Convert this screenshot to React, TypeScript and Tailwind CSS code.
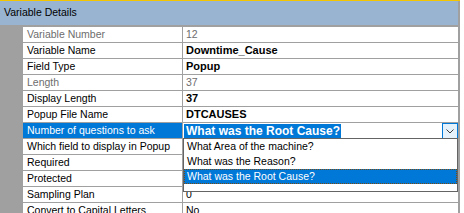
type Row = {
  label: string;
  value?: string;
  bold?: boolean;
  disabled?: boolean;
  combo?: boolean;
};

const ROWS: Row[] = [
  { label: 'Variable Number', value: '12', disabled: true },
  { label: 'Variable Name', value: 'Downtime_Cause', bold: true },
  { label: 'Field Type', value: 'Popup', bold: true },
  { label: 'Length', value: '37', disabled: true },
  { label: 'Display Length', value: '37', bold: true },
  { label: 'Popup File Name', value: 'DTCAUSES', bold: true },
  { label: 'Number of questions to ask', value: 'What was the Root Cause?', combo: true },
  { label: 'Which field to display in Popup' },
  { label: 'Required' },
  { label: 'Protected' },
  { label: 'Sampling Plan', value: '0' },
  { label: 'Convert to Capital Letters', value: 'No' },
];

const OPTIONS = ['What Area of the machine?', 'What was the Reason?', 'What was the Root Cause?'];

const GridRow = ({ row }: { row: Row }) => {
  if (row.combo) {
    return (
      <div className="flex h-[16px] border-b border-[#a0a0a0]">
        <div className="w-[23px] shrink-0 bg-[#a0a0a0]" />
        <div className="w-[160px] shrink-0 border-r border-[#a0a0a0] bg-[#0078d7] pl-[4px] text-[10.5px] leading-[15px] text-white">
          {row.label}
        </div>
        <div className="relative flex flex-1 items-start pl-[1px] leading-[15px]">
          <span className="mt-[1px] block h-[14px] bg-[#0078d7] pl-[2px] pr-[1px] text-[12px] font-bold leading-[14px] text-white">
            {row.value}
          </span>
          <div className="absolute right-0 top-0 flex h-[16px] w-[16px] items-center justify-center border border-[#0078d7] bg-[#e5f1fb]">
            <svg width="8" height="5" viewBox="0 0 8 5">
              <path d="M0.5 0.5 L4 4 L7.5 0.5" fill="none" stroke="#3c3c3c" strokeWidth="1" />
            </svg>
          </div>
        </div>
      </div>
    );
  }
  const valueCls = row.disabled
    ? 'text-[10.5px] text-[#6d6d6d]'
    : row.bold
      ? 'text-[11px] font-bold text-black'
      : 'text-[10.5px] text-black';
  return (
    <div className="flex h-[16px] border-b border-[#a0a0a0]">
      <div className="w-[23px] shrink-0 bg-[#a0a0a0]" />
      <div
        className={`w-[160px] shrink-0 border-r border-[#a0a0a0] pl-[4px] text-[10.5px] leading-[15px] ${
          row.disabled ? 'text-[#6d6d6d]' : 'text-black'
        }`}
      >
        {row.label}
      </div>
      <div className={`flex-1 pl-[3px] leading-[15px] ${valueCls}`}>{row.value}</div>
    </div>
  );
};

export default function App() {
  return (
    <div className="relative h-[213px] w-[464px] overflow-hidden bg-white font-['Liberation_Sans',Arial,sans-serif]">
      <div className="w-[460px] border-t border-[#f2c500]">
        <div className="flex">
          <div className="w-[458px]">
            <div className="flex h-[24px] items-center bg-[#99b4d1] pl-[4px] text-[10.5px] text-black">
              Variable Details
            </div>
            <div className="h-[2px] bg-[#a0a0a0]" />
            {ROWS.map((r) => (
              <GridRow key={r.label} row={r} />
            ))}
          </div>
          <div className="w-[2px] bg-[#a0a0a0]" />
        </div>
      </div>

      <div className="absolute left-[183px] top-[138px] h-[54px] w-[275px] border border-[#646464] bg-white">
        {OPTIONS.map((o, i) => (
          <div
            key={o}
            className={`h-[15px] pl-[2px] text-[10.5px] leading-[13px] ${
              i === 2
                ? 'border border-dotted border-[#7a4a10] bg-[#0078d7] text-white'
                : 'border border-transparent text-black'
            }`}
          >
            {o}
          </div>
        ))}
      </div>
    </div>
  );
}
